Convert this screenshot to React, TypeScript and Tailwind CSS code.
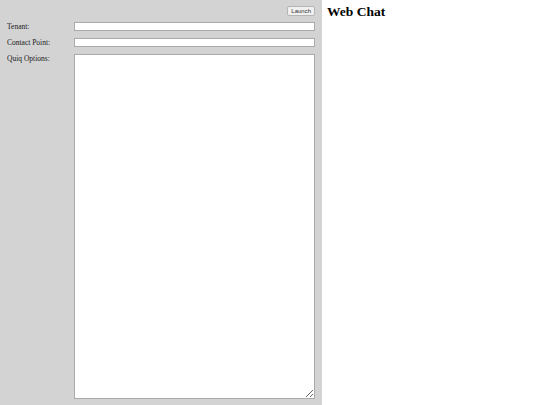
import React from 'react';

const App = () => {
    return (
        <div className="flex h-[405px] w-[540px] bg-white font-['Liberation_Serif',serif] text-black">
            {/* Settings panel */}
            <div className="flex w-[322px] flex-col bg-[#d3d3d3] pl-[7px] pr-[7px] pt-[6px] pb-[6px]">
                <div className="flex justify-end">
                    <button className="h-[10px] rounded-[2px] border border-[#b5b5b5] bg-[#f0f0f0] px-[3px] font-['Liberation_Sans',sans-serif] text-[6px] leading-[8px] text-[#333]">
                        Launch
                    </button>
                </div>
                <div className="mt-[6px] grid flex-1 grid-cols-[67px_1fr] grid-rows-[9px_9px_1fr] gap-y-[7px] text-[7.5px] leading-[9px] text-[#1a1a1a]">
                    <label>Tenant:</label>
                    <input className="h-[9px] border border-[#aaa] bg-white" />
                    <label>Contact Point:</label>
                    <input className="h-[9px] border border-[#aaa] bg-white" />
                    <label>Quiq Options:</label>
                    <textarea className="h-full resize border border-[#aaa] bg-white" />
                </div>
            </div>
            {/* Chat area */}
            <div className="flex-1 pl-[5px] pt-[3px]">
                <h1 className="text-[13.5px] font-bold leading-[17px]">Web Chat</h1>
            </div>
        </div>
    );
};

export default App;
